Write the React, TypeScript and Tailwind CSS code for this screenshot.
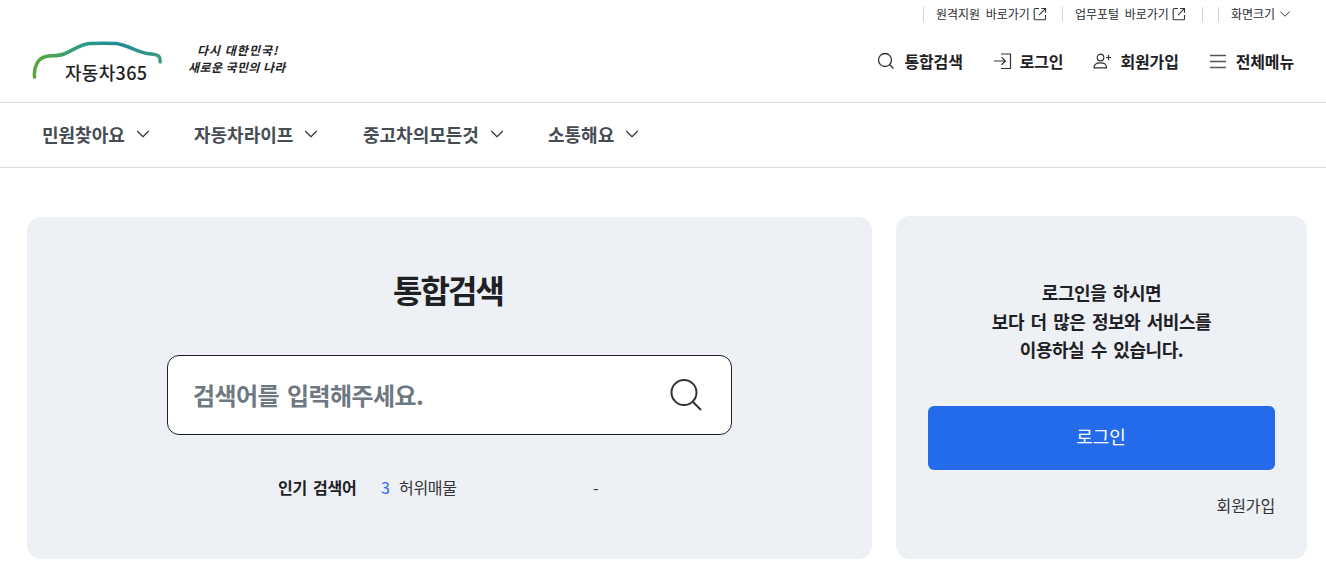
import React from "react";
import { ChevronDown } from "lucide-react";

const Ext = () => (
  <svg width="14" height="14" viewBox="0 0 14 14" fill="none" stroke="#333" strokeWidth="1.1" className="ml-[3px]">
    <path d="M6 1.500H2.200a1 1 0 0 0-1 1v9.300a1 1 0 0 0 1 1h9.300a1 1 0 0 0 1-1V8" />
    <path d="M6 8.200 12.400 1.700M8.200 1.500h4.300v4.300" />
  </svg>
);

const Sep = () => <span className="w-px h-[15px] bg-[#d4d4d4]" />;

function TopAction({ icon, label, className }: { icon: React.ReactNode; label: string; className: string }) {
  return (
    <a className={`flex items-center ${className}`}>
      {icon}
      <span className="text-[16px] leading-6 font-bold tracking-[-0.15px] text-[#1e2124]">{label}</span>
    </a>
  );
}

function NavItem({ label, className }: { label: string; className: string }) {
  return (
    <a className={`flex items-center ${className}`}>
      <span className="text-[18px] leading-7 font-bold tracking-[0px] text-[#464c53]">{label}</span>
      <ChevronDown size={22} strokeWidth={1.25} color="#333" className="ml-[7px]" />
    </a>
  );
}

export default function App() {
  return (
    <div className="w-[1326px] h-[571px] overflow-hidden bg-white font-['Noto_Sans_CJK_KR','Noto_Sans',sans-serif] [word-spacing:0.18em] text-[#1e2124]">
      <header className="h-[103px] border-b border-[#d9d9d9]">
        <div className="flex items-center h-[28px] pl-[923px] text-[12px] text-[#2a2d30] tracking-[0px]">
          <Sep />
          <a className="flex items-center pl-[12px] w-[138px]">원격지원 바로가기<Ext /></a>
          <Sep />
          <a className="flex items-center pl-[12px] w-[139px]">업무포털 바로가기<Ext /></a>
          <Sep />
          <span className="w-[15px]" />
          <Sep />
          <a className="flex items-center pl-[12px]">화면크기<ChevronDown size={18} strokeWidth={1.3} className="ml-px" /></a>
        </div>
        <div className="flex items-center h-[74px] pb-[8px] pl-[32px] pr-[32px]">
          <div className="relative w-[130px] h-[42px]">
            <svg width="130" height="42" viewBox="0 0 130 42" fill="none" className="absolute left-0 top-0">
              <defs>
                <linearGradient id="car" x1="0" x2="1" y1="0" y2="0">
                  <stop offset="0" stopColor="#5aa63c" />
                  <stop offset="0.4" stopColor="#2a9a86" />
                  <stop offset="0.7" stopColor="#1f8a9a" />
                  <stop offset="1" stopColor="#3c9a80" />
                </linearGradient>
              </defs>
              <path d="M2.500 37C1.500 27 6 18 14 16.500c6-1 12-.3 18-2.500C41 10.500 48 4 58 3.500c8-.4 18-.4 26 0C95 5 104 11 115 13.500c6 1 10 .6 12 3 1 1.300 1.200 3.500 1.200 5.500" stroke="url(#car)" strokeWidth="3.500" strokeLinecap="round" />
            </svg>
            <span className="absolute left-[33px] top-[20px] text-[18px] leading-6 font-medium tracking-[0.3px] text-[#222] whitespace-nowrap">자동차365</span>
          </div>
          <div className="ml-[26px] mb-[6px] w-[100px] text-[12px] leading-[17px] font-bold italic text-[#222] [word-spacing:0] whitespace-nowrap">
            <div className="pl-[9px] tracking-[1px]">다시 대한민국!</div>
            <div className="tracking-[0.4px]">새로운 국민의 나라</div>
          </div>
          <div className="flex items-center ml-auto">
            <TopAction
              className="mr-[31px]"
              label="통합검색"
              icon={
                <svg width="18" height="18" viewBox="0 0 18 18" fill="none" stroke="#333" strokeWidth="1.3" className="mr-[9px]">
                  <circle cx="8" cy="8" r="6.500" />
                  <path d="m12.800 12.800 3.700 3.700" />
                </svg>
              }
            />
            <TopAction
              className="mr-[30px]"
              label="로그인"
              icon={
                <svg width="18" height="18" viewBox="0 0 18 18" fill="none" stroke="#333" strokeWidth="1.2" className="mr-[8px]">
                  <path d="M0 9h11M7.500 5.200 11.300 9l-3.800 3.800" />
                  <path d="M7 2h9.500v14.500H7" />
                </svg>
              }
            />
            <TopAction
              className="mr-[31px]"
              label="회원가입"
              icon={
                <svg width="18" height="16" viewBox="0 0 18 16" fill="none" stroke="#333" strokeWidth="1.2" className="mr-[9px]">
                  <circle cx="7.500" cy="4.500" r="3.300" />
                  <path d="M1 14.800c0-3 2.500-5 6.500-5 2 0 3.500.4 4.700 1.300 1 .8 1.300 2 1.300 3.700z" />
                  <path d="M13 4.500h5M15.500 2v5" />
                </svg>
              }
            />
            <TopAction
              className=""
              label="전체메뉴"
              icon={
                <svg width="17" height="15" viewBox="0 0 17 15" fill="none" stroke="#555" strokeWidth="1.3" className="mr-[9px]">
                  <path d="M0 1.500h16M0 7.500h16M0 13.500h16" />
                </svg>
              }
            />
          </div>
        </div>
      </header>
      <nav className="flex items-center h-[65px] pl-[42px] pb-[2px] border-b border-[#d9d9d9]">
        <NavItem className="w-[152px]" label="민원찾아요" />
        <NavItem className="w-[169px]" label="자동차라이프" />
        <NavItem className="w-[185px]" label="중고차의모든것" />
        <NavItem className="" label="소통해요" />
      </nav>
      <main className="flex pl-[27px] pt-[48px] gap-[24px]">
        <section className="w-[845px] h-[342px] mt-px rounded-[14px] bg-[#edf0f5] flex flex-col items-center">
          <h1 className="mt-[49px] mr-[3px] text-[32px] leading-[46px] font-bold tracking-[-2px] text-[#1e2124]">통합검색</h1>
          <div className="mt-[43px] flex items-center justify-between w-[565px] h-[80px] rounded-[12px] border border-[#1e2124] bg-white pl-[25px] pr-[28px]">
            <span className="text-[24px] font-bold tracking-[-0.55px] text-[#6d7882]">검색어를 입력해주세요.</span>
            <svg width="34" height="34" viewBox="0 0 34 34" fill="none" stroke="#333" strokeWidth="2">
              <circle cx="15" cy="14.500" r="12.500" />
              <path d="m24 24 8 8" />
            </svg>
          </div>
          <div className="mt-[38px] self-start ml-[251px] flex items-center h-[28px] text-[16px] tracking-[-0.3px]">
            <strong className="font-bold text-[#1e2124] w-[103px]">인기 검색어</strong>
            <span className="text-[#256ef4] w-[18px]">3</span>
            <span className="text-[#333] w-[194px]">허위매물</span>
            <span className="text-[#333]">-</span>
          </div>
        </section>
        <aside className="w-[411px] h-[343px] rounded-[14px] bg-[#edf0f5] flex flex-col items-center px-[32px]">
          <p className="mt-[62px] text-center text-[18px] leading-[28.500px] font-bold tracking-[-0.45px] text-[#1e2124]">
            로그인을 하시면<br />보다 더 많은 정보와 서비스를<br />이용하실 수 있습니다.
          </p>
          <button className="mt-[42px] w-full h-[64px] pb-[2px] pr-px rounded-[6px] bg-[#246beb] text-white text-[18px] tracking-[0px]">로그인</button>
          <a className="mt-[23px] self-end text-[16px] leading-6 tracking-[-0.1px] text-[#333]">회원가입</a>
        </aside>
      </main>
    </div>
  );
}
